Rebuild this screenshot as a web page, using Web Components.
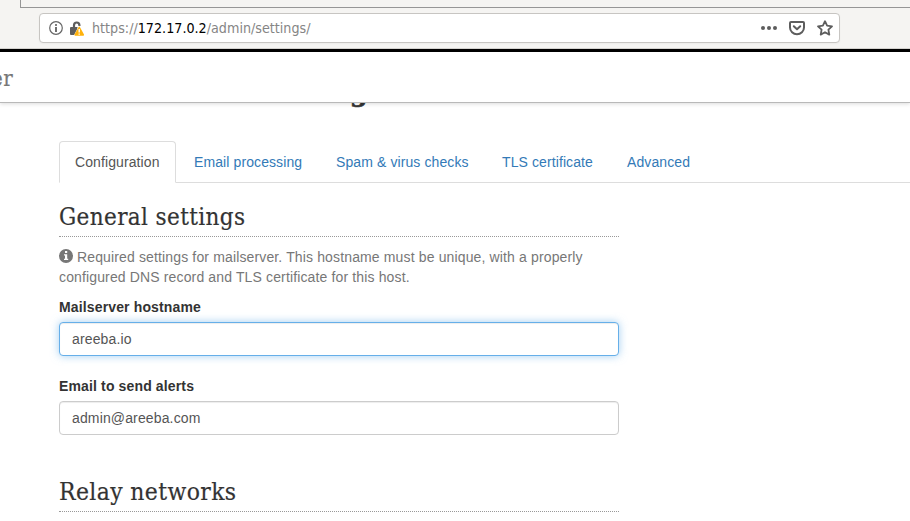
<!DOCTYPE html>
<html lang="en"><head><meta charset="utf-8"><title>Settings</title>
<style>html,body{margin:0;background:#fff;overflow:hidden}body{height:521px;font:14px/20px "Liberation Sans",Arial,sans-serif;color:#333}</style></head>
<body><settings-page></settings-page>
<script>
const define=(name,html,setup)=>customElements.define(name,class extends HTMLElement{
 constructor(){super();const t=document.createElement('template');t.innerHTML=html;this.attachShadow({mode:'open'}).append(t.content.cloneNode(true))}
 connectedCallback(){if(setup)setup(this,this.shadowRoot)}
});

define('slab-text',`<style>:host{display:block;height:26px;font:400 23.5px/28px "Roboto Slab","DejaVu Serif",serif;letter-spacing:.4px;color:#333}span{display:inline-block;white-space:nowrap;transform-origin:0 50%;-webkit-text-stroke:.2px currentColor}</style><span><slot></slot></span>`,(el,r)=>{
 const s=r.querySelector('span'),w=+el.getAttribute('width');
 if(w)s.style.transform='scaleX('+w/s.getBoundingClientRect().width+')';
});

define('browser-bar',`<style>
:host{display:flex;flex-direction:column;box-sizing:border-box;height:52px;background:#f5f4f2;border-bottom:3px solid #000;box-shadow:inset 0 -1px #d4d2cf}
.tabs{height:7px;flex:none;margin-left:20px;border-left:1px solid #969696;border-bottom:1px solid #969696}
.url{box-sizing:border-box;width:801px;height:30px;margin:5px 0 0 39px;border:1px solid #c7c5c2;border-radius:4px;background:#fff;display:flex;align-items:center;box-shadow:0 1px 2px #0000000a;padding:0 6px 0 9px}
svg{display:block;flex:none}.addr{margin:0 0 0 7px;font:13.6px/18px "DejaVu Sans","Noto Sans",sans-serif;color:#858585;flex:1;white-space:nowrap}.addr span{display:inline-block;transform-origin:0 50%}b{font-weight:400;color:#000}
.actions{display:flex;gap:12px}
</style><div class="tabs"></div><div class="url">
<svg width="14" height="14" viewBox="0 0 14 14"><circle cx="7" cy="7" r="6.3" fill="none" stroke="#666" stroke-width="1.2"/><circle cx="7" cy="4.1" r="1" fill="#555"/><path d="M7 6.1v4.8" stroke="#555" stroke-width="1.7"/></svg>
<svg style="margin-left:7px" width="15" height="15" viewBox="0 0 15 15"><path d="M4 7V4.2a2.7 2.7 0 0 1 5.4 0V5" fill="none" stroke="#5d5d5d" stroke-width="2.2"/><path d="M1 6h6.5v8H1q-1 0-1-1V7q0-1 1-1Z" fill="#5d5d5d"/><path d="M9 4.4 14.2 14.8H3.7Z" fill="#fff"/><path d="M9.2 5.6q.5 0 .8.6l4 7.4q.4 1-.7 1.1H5.2q-1.1-.1-.7-1.1l4-7.4q.3-.6.7-.6Z" fill="#ffb20b"/><path d="M9.2 8v3.4m0 1v1.3" stroke="#fff" stroke-width="1.4"/></svg>
<div class="addr"><span>https://<b>172.17.0.2</b>/admin/settings/</span></div>
<div class="actions">
<svg width="16" height="16" viewBox="0 0 16 16" fill="#5d5d5d"><circle cx="2" cy="8" r="2"/><circle cx="8" cy="8" r="2"/><circle cx="14" cy="8" r="2"/></svg>
<svg width="16" height="16" viewBox="0 0 16 16" fill="none" stroke="#5d5d5d" stroke-width="2" stroke-linecap="round" stroke-linejoin="round"><path d="M2 2h12q1 0 1 1v4.5a7 6.7 0 0 1-14 0V3q0-1 1-1Z"/><path d="m4.8 6.3 3.2 3 3.2-3"/></svg>
<svg width="16" height="16" viewBox="0 0 16 16"><path d="m8 1.2 2.1 4.5 4.9.6-3.6 3.3.9 5L8 12.2l-4.3 2.4.9-5L1 6.3l4.9-.6Z" fill="none" stroke="#5d5d5d" stroke-width="1.8" stroke-linejoin="round"/></svg>
</div></div>`,(el,r)=>{const s=r.querySelector('.addr span');s.style.transform='scaleX('+218.5/s.getBoundingClientRect().width+')'});

define('site-header',`<style>:host{display:block;box-sizing:border-box;height:51px;background:#fff;border-bottom:1px solid #b9b9b9;box-shadow:0 1px 4px #00000024;position:relative;z-index:1;overflow:visible}
slab-text{margin-left:-9px;padding-top:13px;color:#777;font-size:22px}</style><slab-text width="22">er</slab-text>`);

define('nav-tab',`<style>:host{display:block;box-sizing:border-box;height:42px;padding:10px 0 10px 15px;border:1px solid transparent;border-radius:4px 4px 0 0;margin:0 2px -1px 0;color:#337ab7;white-space:nowrap;letter-spacing:.1px}
:host([active]){color:#555;background:#fff;border-color:#ddd #ddd #fff}</style><slot></slot>`);
define('nav-tabs',`<style>:host{display:grid;grid-template-columns:119px 142px 166px 125px 96px;border-bottom:1px solid #ddd;height:41px}</style><slot></slot>`);

define('section-title',`<style>:host{display:block;box-sizing:border-box;height:34px;border-bottom:1px dotted #999}</style><slot></slot>`);

define('form-field',`<style>:host{display:block;margin-bottom:20px}label{display:block;font-weight:700;color:#333;margin-bottom:5px}
.box{box-sizing:border-box;height:34px;padding:6px 12px;border:1px solid #ccc;border-radius:4px;background:#fff;color:#555;box-shadow:inset 0 1px 1px rgba(0,0,0,.075)}
:host([focused]) .box{border-color:#66afe9;box-shadow:inset 0 1px 1px rgba(0,0,0,.075),0 0 8px rgba(102,175,233,.6)}</style><label></label><div class="box"><slot></slot></div>`,(el,r)=>r.querySelector('label').textContent=el.getAttribute('label'));

define('settings-page',`<style>:host{display:block;height:521px;overflow:hidden}
main{display:block;padding-left:59px}.title{height:38px;display:flow-root}.title span{display:block;margin:-24px 0 0 291px;font:700 25px/30px "DejaVu Serif",serif;color:#333;height:30px;-webkit-text-stroke:.7px #333}
.column{width:560px;padding-top:20px;letter-spacing:.14px}.hint{margin:10px 0;color:#777}svg{width:14px;height:14px;vertical-align:-1px;margin-right:4px}
section-title.next{margin-top:43px}</style>
<browser-bar></browser-bar><site-header></site-header>
<main><div class="title"><span>g</span></div>
<nav-tabs><nav-tab active>Configuration</nav-tab><nav-tab>Email processing</nav-tab><nav-tab>Spam &amp; virus checks</nav-tab><nav-tab>TLS certificate</nav-tab><nav-tab>Advanced</nav-tab></nav-tabs>
<div class="column"><section-title><slab-text width="186.5">General settings</slab-text></section-title>
<div class="hint"><svg viewBox="0 0 14 14"><circle cx="7" cy="7" r="7" fill="#777"/><path d="M6 2h2.2v2H6zM5 5.2h3.2v4.6h1V11H5V9.8h1V6.4H5z" fill="#fff"/></svg>Required settings for mailserver. This hostname must be unique, with a properly configured DNS record and TLS certificate for this host.</div>
<form-field label="Mailserver hostname" focused>areeba.io</form-field>
<form-field label="Email to send alerts">admin@areeba.com</form-field>
<section-title class="next"><slab-text width="177.5">Relay networks</slab-text></section-title></div></main>`);
</script></body></html>
